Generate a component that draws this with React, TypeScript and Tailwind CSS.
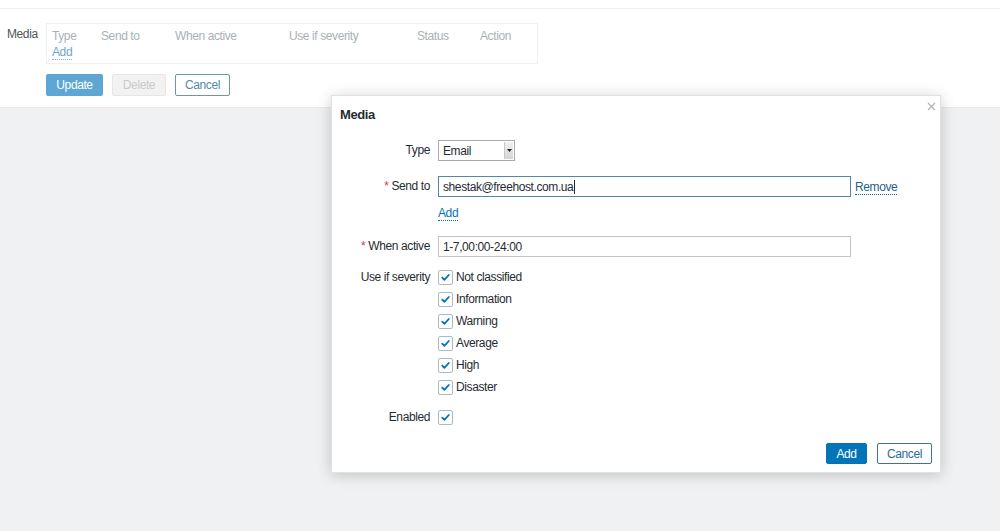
import React from "react";

const font = { fontFamily: '"Liberation Sans", Arial, sans-serif' };

function Check() {
  return (
    <span className="inline-flex w-[15px] h-[15px] shrink-0 items-center justify-center rounded-[2px] border border-[#acbbc2] bg-white">
      <svg width="11" height="11" viewBox="0 0 11 11">
        <path d="M2.2 5.6 L4.4 7.8 L8.8 3" fill="none" stroke="#0275b8" strokeWidth="1.8" strokeLinecap="round" strokeLinejoin="round" />
      </svg>
    </span>
  );
}

function Label({ text, req }: { text: string; req?: boolean }) {
  return (
    <div className="w-[89px] shrink-0 text-right text-[12px] leading-[15px] tracking-[-0.4px] text-[#1f2c33]">
      {req && <span className="mr-[3px] text-[#e33734]">*</span>}
      {text}
    </div>
  );
}

export default function App() {
  const sev = ["Not classified", "Information", "Warning", "Average", "High", "Disaster"];
  return (
    <div className="relative h-[531px] w-[1000px] overflow-hidden bg-[#f0f1f3]" style={font}>
      {/* background page */}
      <div className="h-[108px] border-b border-[#e8e9eb] bg-white">
        <div className="h-[9px] border-b border-[#eeeeee]" />
        <div className="flex pt-[14px] tracking-[-0.4px]">
          <div className="w-[46px] pl-[7px] pt-[4px] text-[12px] leading-[14px] text-[#4e575c]">Media</div>
          <div className="flex flex-col">
            <div className="h-[41px] w-[492px] border border-[#f0f0f0] pl-[5px] pt-[5px] text-[12px] leading-[14px]">
              <div className="flex text-[#a9b1b6]">
                <span className="w-[49px]">Type</span>
                <span className="w-[74px]">Send to</span>
                <span className="w-[114px]">When active</span>
                <span className="w-[128px]">Use if severity</span>
                <span className="w-[63px]">Status</span>
                <span>Action</span>
              </div>
              <div className="mt-[2px]">
                <span className="border-b border-dotted border-[#7fb0d0] text-[#6aa6cc]">Add</span>
              </div>
            </div>
            <div className="mt-[10px] flex gap-[9px]">
              <div className="flex h-[22px] w-[57px] items-center justify-center rounded-[2px] bg-[#5ea7d5] text-[12px] text-white">Update</div>
              <div className="flex h-[22px] w-[54px] items-center justify-center rounded-[2px] border border-[#e6e6e6] bg-[#f2f2f2] text-[12px] text-[#cbcbcb]">Delete</div>
              <div className="flex h-[22px] w-[55px] items-center justify-center rounded-[2px] border border-[#6f95a8] bg-white text-[12px] text-[#4f8ab0]">Cancel</div>
            </div>
          </div>
        </div>
      </div>

      {/* modal */}
      <div className="absolute left-[331px] top-[95px] w-[610px] h-[378px] border border-[#dfe1e3] bg-white shadow-[0_2px_14px_rgba(0,0,0,0.2)] tracking-[-0.4px]">
        <div className="relative flex h-[38px] items-center pl-[8px] text-[13px] font-bold text-[#1f2c33]">
          Media
          <svg className="absolute right-[4px] top-[6px]" width="9" height="9" viewBox="0 0 9 9">
            <path d="M1 1 L8 8 M8 1 L1 8" stroke="#b4b4b4" strokeWidth="1.3" />
          </svg>
        </div>
        <div className="pl-[9px]">
          {/* Type */}
          <div className="mt-[6px] flex items-center gap-[8px]">
            <Label text="Type" />
            <div className="relative flex h-[21px] w-[77px] items-center border border-[#a9a9a9] bg-white pl-[4px] text-[12px] text-[#1f2c33]">
              Email
              <span className="absolute right-[1px] top-[1px] bottom-[1px] flex w-[9px] items-center justify-center bg-gradient-to-b from-[#f1f1f1] to-[#d4d4d4] border-l border-[#c8c8c8]">
                <svg width="5" height="3" viewBox="0 0 5 3"><path d="M0 0 H5 L2.5 3 Z" fill="#222" /></svg>
              </span>
            </div>
          </div>
          {/* Send to */}
          <div className="mt-[15px] flex items-center gap-[8px]">
            <Label text="Send to" req />
            <div className="flex h-[21px] w-[413px] items-center border border-[#4f8aa0] bg-white pl-[4px] text-[12px] text-[#1f2c33]">
              shestak@freehost.com.ua<span className="ml-[1px] inline-block h-[14px] w-[1px] bg-[#1f2c33]" />
            </div>
            <span className="ml-[-4px] translate-y-[1px] border-b border-dotted border-[#1f5f8b] text-[12px] leading-[13px] text-[#1f5f8b]">Remove</span>
          </div>
          {/* Add */}
          <div className="mt-[10px] flex gap-[8px]">
            <div className="w-[89px]" />
            <span className="border-b border-dotted border-[#0275b8] text-[12px] leading-[13px] text-[#0275b8]">Add</span>
          </div>
          {/* When active */}
          <div className="mt-[15px] flex items-center gap-[8px]">
            <Label text="When active" req />
            <div className="flex h-[21px] w-[413px] items-center border border-[#c4c4c4] bg-white pl-[4px] text-[12px] text-[#1f2c33]">1-7,00:00-24:00</div>
          </div>
          {/* Severity */}
          <div className="mt-[13px] flex gap-[8px]">
            <Label text="Use if severity" />
            <div className="flex flex-col gap-[7px]">
              {sev.map((s) => (
                <div key={s} className="flex h-[15px] items-center gap-[3px] text-[12px] leading-[15px] text-[#1f2c33]">
                  <Check />
                  <span>{s}</span>
                </div>
              ))}
            </div>
          </div>
          {/* Enabled */}
          <div className="mt-[15px] flex h-[15px] items-center gap-[8px]">
            <Label text="Enabled" />
            <Check />
          </div>
        </div>
        {/* buttons */}
        <div className="mt-[18px] flex justify-end gap-[10px] pr-[8px]">
          <div className="flex h-[21px] w-[41px] items-center justify-center rounded-[2px] border border-[#0275b8] bg-[#0275b8] text-[12px] text-white">Add</div>
          <div className="flex h-[21px] w-[55px] items-center justify-center rounded-[2px] border border-[#3e7392] bg-white text-[12px] text-[#1f6b9e]">Cancel</div>
        </div>
      </div>
    </div>
  );
}
